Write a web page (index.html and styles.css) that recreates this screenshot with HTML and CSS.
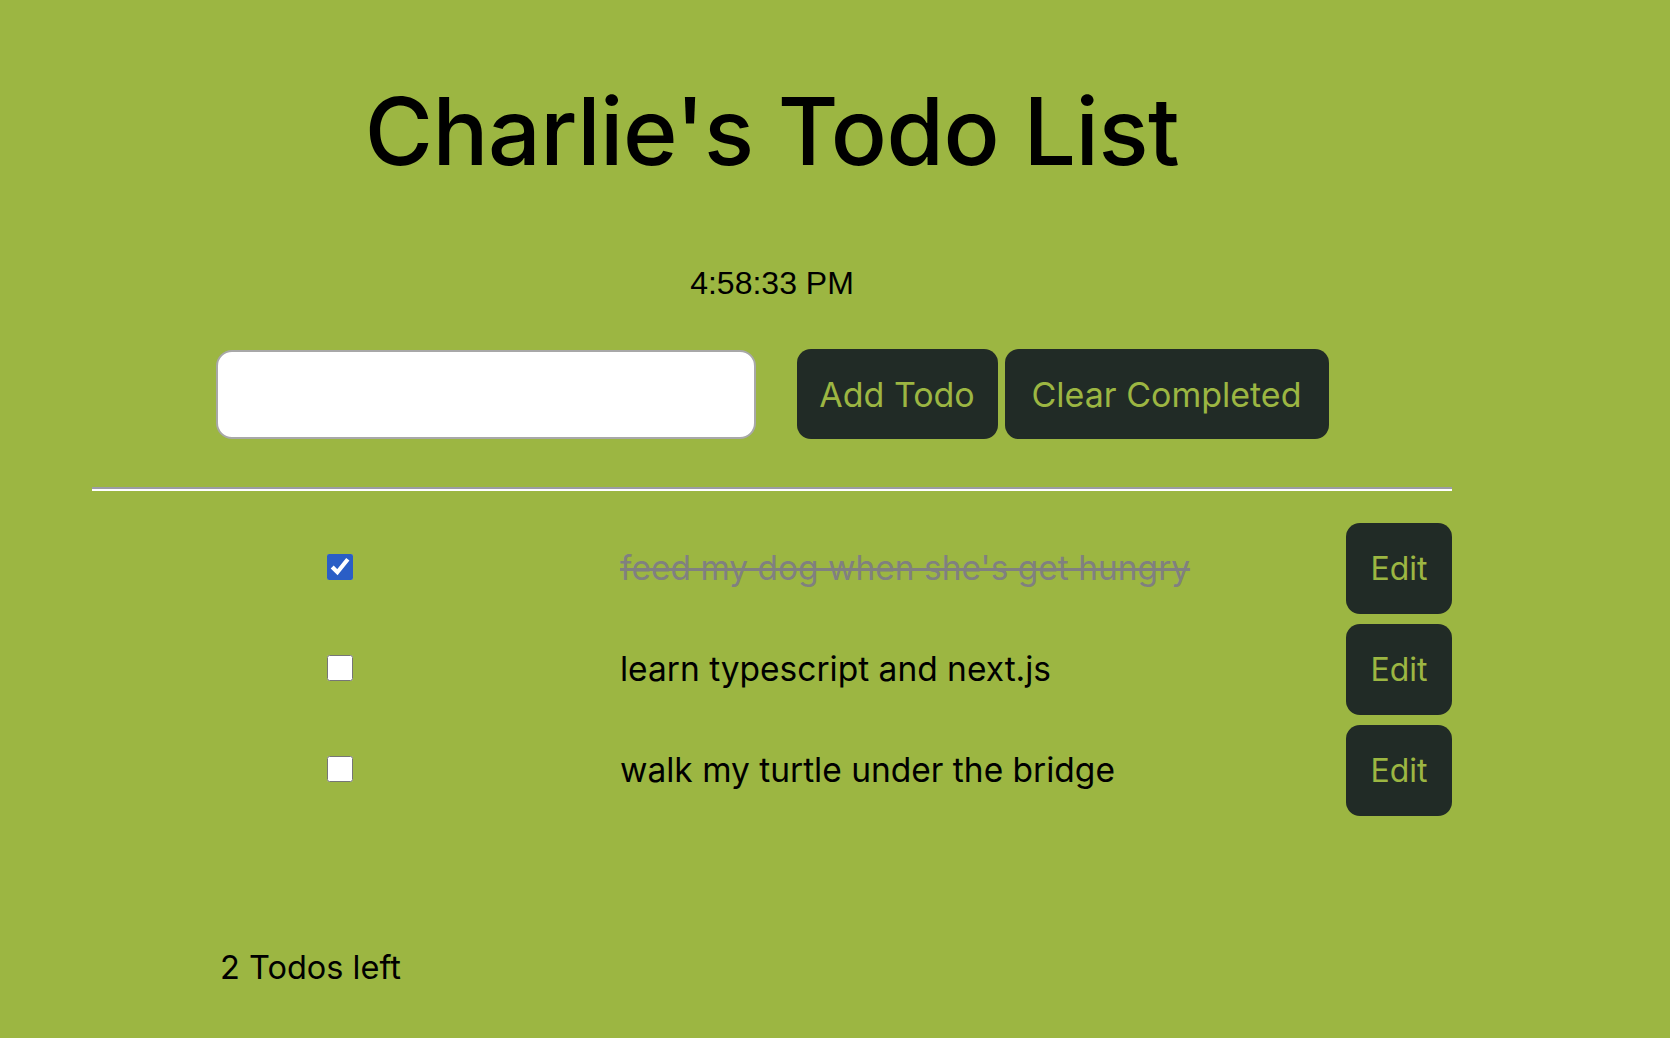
FILE: index.html
```html
<!DOCTYPE html>
<html lang="en">
<head>
<meta charset="utf-8">
<title>Charlie's Todo List</title>
<link rel="stylesheet" href="styles.css">
</head>
<body>
<main class="app">
  <h1 class="title">Charlie's Todo List</h1>
  <p class="clock">4:58:33 PM</p>
  <form class="add-form">
    <input class="todo-input" type="text" aria-label="New todo">
    <div class="add-actions">
      <button type="button" class="btn btn-add">Add Todo</button>
      <button type="button" class="btn btn-clear">Clear Completed</button>
    </div>
  </form>
  <hr class="divider">
  <ul class="todo-list">
    <li class="todo-row">
      <input class="todo-check" type="checkbox" checked aria-label="done">
      <span class="todo-text done">feed my dog when she's get hungry</span>
      <button type="button" class="btn btn-edit">Edit</button>
    </li>
    <li class="todo-row">
      <input class="todo-check" type="checkbox" aria-label="done">
      <span class="todo-text">learn typescript and next.js</span>
      <button type="button" class="btn btn-edit">Edit</button>
    </li>
    <li class="todo-row">
      <input class="todo-check" type="checkbox" aria-label="done">
      <span class="todo-text">walk my turtle under the bridge</span>
      <button type="button" class="btn btn-edit">Edit</button>
    </li>
  </ul>
  <p class="remaining">2 Todos left</p>
</main>
</body>
</html>
```

FILE: styles.css
```css
* { box-sizing: border-box; }

html, body {
  margin: 0;
  padding: 0;
}

body {
  background: #9cb642;
  color: #000;
  font-family: Inter, "Open Sans", sans-serif;
  height: 1038px;
  overflow: hidden;
}

.app {
  width: 1360px;
  margin-left: 92px;
  display: flex;
  flex-direction: column;
}

.title {
  margin: 85px 0 0;
  font-size: 93px;
  font-weight: 500;
  line-height: 1;
  text-align: center;
  letter-spacing: -0.5px;
}

.clock {
  margin: 89px 0 0;
  font-family: "Liberation Sans", Arial, sans-serif;
  font-size: 32px;
  line-height: 1;
  text-align: center;
}

.add-form {
  margin-top: 50px;
  display: flex;
  justify-content: center;
  align-items: center;
  gap: 41px;
}

.todo-input {
  width: 540px;
  height: 89px;
  border: 2px solid #a8a8a8;
  border-radius: 16px;
  background: #fff;
  font-size: 28px;
  padding: 0 16px;
}

.add-actions {
  display: flex;
  gap: 7px;
}

.btn {
  height: 90px;
  border: none;
  border-radius: 14px;
  background: #212b26;
  color: #9cb642;
  font-family: Inter, "Open Sans", sans-serif;
  font-size: 34px;
  padding: 0 20px;
  cursor: pointer;
}

.btn-add { width: 201px; }
.btn-clear { width: 324px; }

.divider {
  margin: 48px 0 0;
  height: 0;
  border: none;
  border-top: 2px solid #9b9ca4;
  border-bottom: 2px solid #fff;
}

.todo-list {
  list-style: none;
  margin: 32px 0 0;
  padding: 0;
  display: flex;
  flex-direction: column;
  gap: 10px;
}

.todo-row {
  display: grid;
  grid-template-columns: 496px 1fr auto;
  align-items: center;
}

.todo-check {
  justify-self: center;
  width: 26px;
  height: 26px;
  margin: 0 0 3px;
  accent-color: #2a5ec6;
}

.todo-text {
  padding-left: 32px;
  font-size: 33.5px;
  line-height: 1.2;
}

.todo-text.done {
  color: #808080;
  text-decoration: line-through;
  text-decoration-thickness: 3px;
}

.btn-edit {
  width: 106px;
  height: 91px;
  padding: 0;
  font-size: 32px;
}

.remaining {
  margin: 136px 0 0 128px;
  font-size: 32.5px;
  line-height: 1;
}
```
